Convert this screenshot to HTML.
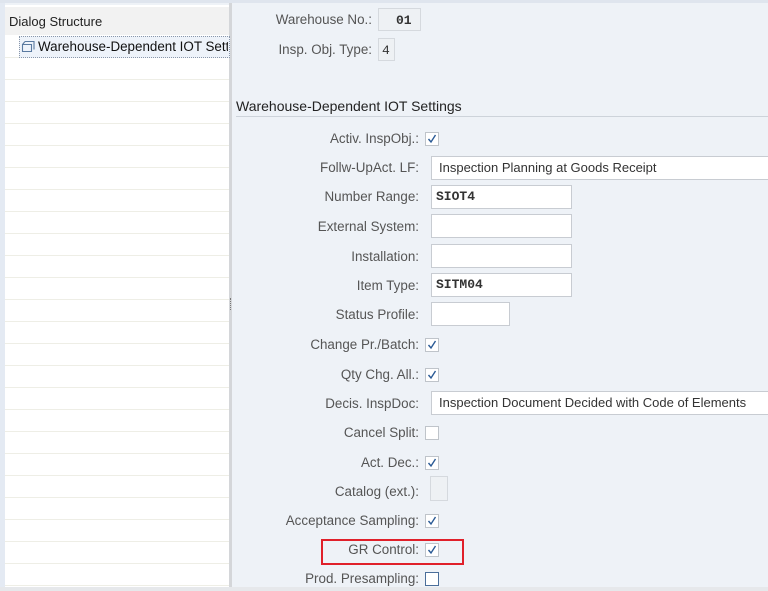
<!DOCTYPE html>
<html><head><style>
body{margin:0;width:768px;height:591px;overflow:hidden;background:#eef2f7;font-family:"Liberation Sans",sans-serif;font-size:13px;color:#333;position:relative}
.a{position:absolute}
.lbl{position:absolute;right:349px;color:#555;white-space:nowrap;font-size:13.4px}
.in{position:absolute;background:#fff;border:1px solid #c8ccd2;box-sizing:border-box;height:24px;font-size:13px;line-height:22px;padding-left:7px;color:#333;white-space:nowrap;overflow:hidden}
.mono{font-family:"Liberation Mono",monospace;font-weight:bold;font-size:13px}
.cb{position:absolute;left:425px;width:12px;height:12px;background:#fff;border:1px solid #bfc4ca}
.cb svg{position:absolute;left:1px;top:1px}
</style></head><body>
<div class="a" style="left:0;top:0;width:768px;height:3px;background:#dfe5ee"></div>
<div class="a" style="left:0;top:3px;width:5px;height:588px;background:#e4eaf3"></div>
<div class="a" style="left:5px;top:5px;width:224px;height:582px;background:#fff"></div>
<div class="a" style="left:5px;top:7px;width:224px;height:28px;background:#f2f2f2"></div>
<div class="a" style="left:9px;top:14px;font-size:13px;color:#222">Dialog Structure</div>
<div class="a" style="left:229px;top:3px;width:3px;height:584px;background:#d4d6d9"></div>
<div class="a" style="left:230px;top:298px;width:1px;height:12px;border-left:1px dotted #777"></div>
<div class="a" style="left:0;top:587px;width:768px;height:4px;background:#e6e8eb"></div>
<div id="rows"></div>
<div class="a" style="left:19px;top:36px;width:209px;height:20px;border:1px dotted #8a97aa;background:#eef3fa;overflow:hidden"></div>
<svg class="a" style="left:21px;top:40px" width="15" height="13"><path d="M4 1.5h9v8M1.5 4.5h9v7h-9z M1.5 4.5l2.5-3" fill="none" stroke="#5a7aa0" stroke-width="1.1"/></svg>
<div class="a" style="left:38px;top:39px;font-size:13.4px;color:#111;white-space:nowrap;width:190px;overflow:hidden">Warehouse-Dependent IOT Settings</div>

<div class="lbl" style="top:12px;right:396px">Warehouse No.:</div>
<div class="in" style="left:378px;top:8px;width:43px;height:23px;background:#eef1f4;border-color:#d5d9de"><span class="mono" style="padding-left:10px">01</span></div>
<div class="lbl" style="top:42px;right:396px">Insp. Obj. Type:</div>
<div class="in" style="left:378px;top:38px;width:17px;height:23px;background:#eef1f4;border-color:#d5d9de;padding-left:3px"><span class="mono" style="font-weight:normal">4</span></div>
<div class="a" style="left:236px;top:98px;font-size:14px;color:#222">Warehouse-Dependent IOT Settings</div>
<div class="a" style="left:236px;top:116px;width:532px;height:1px;background:#cdd3da"></div>

<div class="lbl" style="top:131px">Activ. InspObj.:</div>
<div class="lbl" style="top:160px">Follw-UpAct. LF:</div>
<div class="in" style="left:431px;top:156px;width:340px">Inspection Planning at Goods Receipt</div>
<div class="lbl" style="top:189px">Number Range:</div>
<div class="in mono" style="left:431px;top:185px;width:141px;padding-left:4px">SIOT4</div>
<div class="lbl" style="top:219px">External System:</div>
<div class="in" style="left:431px;top:214px;width:141px"></div>
<div class="lbl" style="top:249px">Installation:</div>
<div class="in" style="left:431px;top:244px;width:141px"></div>
<div class="lbl" style="top:278px">Item Type:</div>
<div class="in mono" style="left:431px;top:273px;width:141px;padding-left:4px">SITM04</div>
<div class="lbl" style="top:307px">Status Profile:</div>
<div class="in" style="left:431px;top:302px;width:79px"></div>
<div class="lbl" style="top:337px">Change Pr./Batch:</div>
<div class="lbl" style="top:367px">Qty Chg. All.:</div>
<div class="lbl" style="top:396px">Decis. InspDoc:</div>
<div class="in" style="left:431px;top:391px;width:340px">Inspection Document Decided with Code of Elements</div>
<div class="lbl" style="top:425px">Cancel Split:</div>
<div class="lbl" style="top:455px">Act. Dec.:</div>
<div class="lbl" style="top:484px">Catalog (ext.):</div>
<div class="in" style="left:430px;top:476px;width:18px;height:25px;background:#eef1f4;border-color:#d5d9de"></div>
<div class="lbl" style="top:513px">Acceptance Sampling:</div>
<div class="lbl" style="top:542px">GR Control:</div>
<div class="a" style="left:321px;top:539px;width:139px;height:22px;border:2px solid #e0202a"></div>
<div class="lbl" style="top:571px">Prod. Presampling:</div>

<div class="cb" style="top:132px"><svg width="10" height="10"><path d="M1.5 5l2.5 3 4.5-7" fill="none" stroke="#2a5a95" stroke-width="1.4"/></svg></div>
<div class="cb" style="top:338px"><svg width="10" height="10"><path d="M1.5 5l2.5 3 4.5-7" fill="none" stroke="#2a5a95" stroke-width="1.4"/></svg></div>
<div class="cb" style="top:368px"><svg width="10" height="10"><path d="M1.5 5l2.5 3 4.5-7" fill="none" stroke="#2a5a95" stroke-width="1.4"/></svg></div>
<div class="cb" style="top:426px"></div>
<div class="cb" style="top:456px"><svg width="10" height="10"><path d="M1.5 5l2.5 3 4.5-7" fill="none" stroke="#2a5a95" stroke-width="1.4"/></svg></div>
<div class="cb" style="top:514px"><svg width="10" height="10"><path d="M1.5 5l2.5 3 4.5-7" fill="none" stroke="#2a5a95" stroke-width="1.4"/></svg></div>
<div class="cb" style="top:543px"><svg width="10" height="10"><path d="M1.5 5l2.5 3 4.5-7" fill="none" stroke="#2a5a95" stroke-width="1.4"/></svg></div>
<div class="cb" style="top:572px;border-color:#4a6e9a"></div>
<script>
var h='';for(var y=57;y<587;y+=22)h+='<div class="a" style="left:5px;top:'+y+'px;width:224px;height:1px;background:#eeeee6"></div>';
document.getElementById('rows').innerHTML=h;
</script>
</body></html>
